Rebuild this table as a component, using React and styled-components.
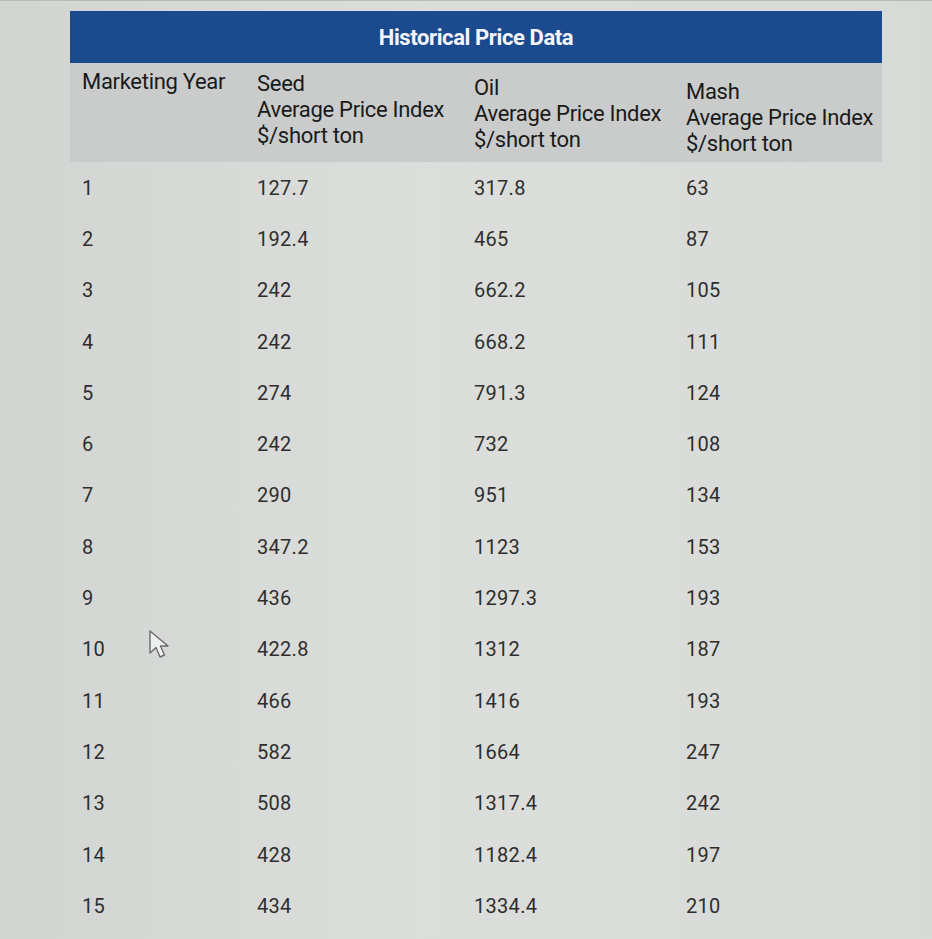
import React from "react";
import styled, { createGlobalStyle } from "styled-components";

const Global = createGlobalStyle`
  html, body { margin: 0; padding: 0; background: #d7d9d7; }
  body { font-family: Roboto, "Liberation Sans", Arial, sans-serif; }
`;

const Page = styled.div`
  position: relative;
  width: 932px;
  height: 939px;
  overflow: hidden;
  background: linear-gradient(90deg, #d3d5d3 0%, #dcdedc 45%, #d8dad8 100%);
  border-top: 1px solid #b9bbb9;
  box-sizing: border-box;
  padding: 10px 0 0 70px;
`;

const Table = styled.div`
  width: 812px;
  display: flex;
  flex-direction: column;
`;

const TitleBar = styled.div`
  height: 52px;
  background: #1b4a8e;
  color: #f4f6fa;
  font-weight: 700;
  font-size: 22px;
  letter-spacing: -0.4px;
  display: flex;
  align-items: center;
  justify-content: center;
`;

const Grid = styled.div`
  display: grid;
  grid-template-columns: 175px 217px 212px 208px;
`;

const HeadCell = styled.div`
  background: #cacccb;
  height: 99px;
  box-sizing: border-box;
  padding: ${(p) => p.$top}px 0 0 12px;
  font-size: 22px;
  line-height: 26px;
  color: #1a1a1a;
  letter-spacing: -0.3px;
  white-space: nowrap;
  overflow: visible;
`;

const Cell = styled.div`
  height: 51.3px;
  display: flex;
  align-items: center;
  padding-left: 12px;
  font-size: 20px;
  color: #2e2e2e;
  letter-spacing: 0.3px;
`;

const Cursor = styled.svg`
  position: absolute;
  left: 147px;
  top: 628px;
`;

const rows = [
  [1, "127.7", "317.8", "63"],
  [2, "192.4", "465", "87"],
  [3, "242", "662.2", "105"],
  [4, "242", "668.2", "111"],
  [5, "274", "791.3", "124"],
  [6, "242", "732", "108"],
  [7, "290", "951", "134"],
  [8, "347.2", "1123", "153"],
  [9, "436", "1297.3", "193"],
  [10, "422.8", "1312", "187"],
  [11, "466", "1416", "193"],
  [12, "582", "1664", "247"],
  [13, "508", "1317.4", "242"],
  [14, "428", "1182.4", "197"],
  [15, "434", "1334.4", "210"],
];

const heads = [
  { top: 6, lines: ["Marketing Year"] },
  { top: 8, lines: ["Seed", "Average Price Index", "$/short ton"] },
  { top: 12, lines: ["Oil", "Average Price Index", "$/short ton"] },
  { top: 16, lines: ["Mash", "Average Price Index", "$/short ton"] },
];

export default function App() {
  return (
    <Page>
      <Global />
      <Table>
        <TitleBar>Historical Price Data</TitleBar>
        <Grid>
          {heads.map((h, i) => (
            <HeadCell key={i} $top={h.top}>
              {h.lines.map((l, j) => (
                <div key={j}>{l}</div>
              ))}
            </HeadCell>
          ))}
          {rows.map((r) =>
            r.map((v, j) => <Cell key={r[0] + "-" + j}>{v}</Cell>)
          )}
        </Grid>
      </Table>
      <Cursor width="30" height="32" viewBox="0 0 30 32">
        <path
          d="M3 2 L3 24 L9 18.5 L13 28 L17.5 26 L13.5 17 L21 17 Z"
          fill="#eef0ee"
          stroke="#6a6c6b"
          strokeWidth="1.4"
          strokeLinejoin="round"
        />
      </Cursor>
    </Page>
  );
}
